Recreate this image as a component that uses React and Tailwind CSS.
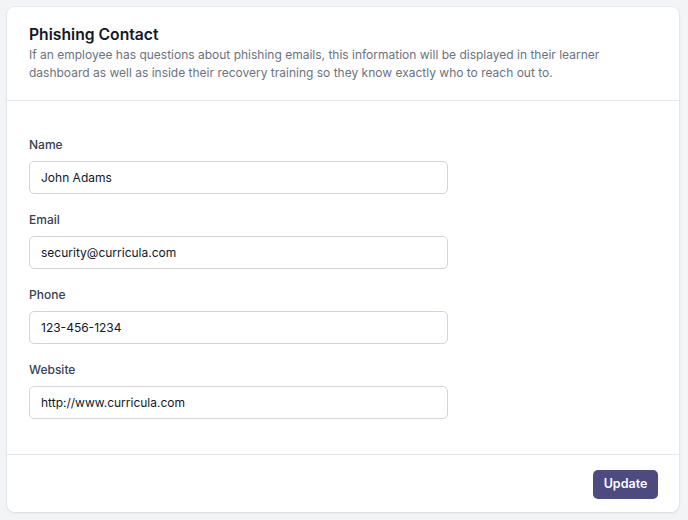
export default function App() {
  const fields = [
    { label: "Name", value: "John Adams" },
    { label: "Email", value: "security@curricula.com" },
    { label: "Phone", value: "123-456-1234" },
    { label: "Website", value: "http://www.curricula.com" },
  ];
  return (
    <div
      className="w-[688px] h-[520px] bg-[#f3f4f6] pt-[7px] pl-[7px]"
      style={{ fontFamily: "Inter, 'Noto Sans', sans-serif" }}
    >
      <div className="w-[672px] h-[505px] bg-white rounded-lg shadow-[0_1px_3px_rgba(0,0,0,0.08),0_0_0_1px_rgba(0,0,0,0.03)] flex flex-col">
        <div className="px-[22px] pt-[16px] pb-[18px] border-b border-[#e5e7eb]">
          <h2 className="text-[15.7px] leading-[24px] font-semibold text-[#111827]">Phishing Contact</h2>
          <p className="text-[12px] leading-[18px] text-[#6b7280] mt-[-1px]">
            If an employee has questions about phishing emails, this information will be displayed in their learner
            <br />
            dashboard as well as inside their recovery training so they know exactly who to reach out to.
          </p>
        </div>
        <div className="px-[22px] pt-[35px] pb-[35px] flex flex-col gap-[17px] border-b border-[#e5e7eb]">
          {fields.map((f) => (
            <div key={f.label} className="flex flex-col">
              <label className="text-[12px] leading-[18px] font-medium text-[#374151]">{f.label}</label>
              <div className="mt-[7px] w-[419px] h-[33px] rounded-[5px] border border-[#d1d5db] flex items-center pl-[11px] text-[12px] text-[#111827]">
                {f.value}
              </div>
            </div>
          ))}
        </div>
        <div className="flex justify-end px-[21px] pt-[15px]">
          <button className="w-[65px] h-[29px] rounded-[5px] bg-[#4c4a7f] text-white text-[12.5px] font-semibold">
            Update
          </button>
        </div>
      </div>
    </div>
  );
}
